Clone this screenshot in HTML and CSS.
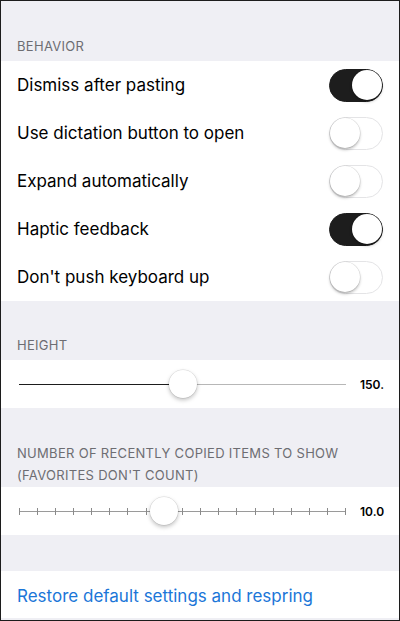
FILE: index.html
```html
<!DOCTYPE html>
<html lang="en">
<head>
  <meta charset="UTF-8" />
  <meta name="viewport" content="width=device-width, initial-scale=1.0"/>
  <title>Settings</title>
  <link rel="stylesheet" href="styles.css">
</head>
<body>
  <div class="ajustes">

    <!-- Behavior -->
    <div class="cabecera primera">BEHAVIOR</div>
    <div class="grupo">
      <div class="fila">
        <span>Dismiss after pasting</span>
        <span class="interruptor on"><span class="perilla"></span></span>
      </div>
      <div class="fila">
        <span>Use dictation button to open</span>
        <span class="interruptor"><span class="perilla"></span></span>
      </div>
      <div class="fila">
        <span>Expand automatically</span>
        <span class="interruptor"><span class="perilla"></span></span>
      </div>
      <div class="fila">
        <span>Haptic feedback</span>
        <span class="interruptor on"><span class="perilla"></span></span>
      </div>
      <div class="fila">
        <span>Don't push keyboard up</span>
        <span class="interruptor"><span class="perilla"></span></span>
      </div>
    </div>

    <!-- Height -->
    <div class="cabecera">HEIGHT</div>
    <div class="grupo">
      <div class="fila deslizador">
        <div class="pista">
          <div class="relleno" style="width: 50%"></div>
          <div class="pulgar" style="left: 50%"></div>
        </div>
        <span class="valor">150.</span>
      </div>
    </div>

    <!-- Items -->
    <div class="cabecera doble">NUMBER OF RECENTLY COPIED ITEMS TO SHOW<br>(FAVORITES DON'T COUNT)</div>
    <div class="grupo">
      <div class="fila deslizador">
        <div class="pista gris">
          <div class="marcas" id="marcas"></div>
          <div class="pulgar" style="left: 44.44%"></div>
        </div>
        <span class="valor">10.0</span>
      </div>
    </div>

    <div class="separador"></div>
    <div class="grupo">
      <div class="fila enlace">Restore default settings and respring</div>
    </div>
  </div>

  <script>
    // 19 marcas para el deslizador de 2 a 20
    const marcas = document.getElementById('marcas');
    for (let i = 0; i < 19; i++) {
      const m = document.createElement('span');
      m.classList.add('marca');
      marcas.appendChild(m);
    }
  </script>
</body>
</html>
```

FILE: styles.css
```css
body {
  margin: 0;
  font-family: Inter, 'Liberation Sans', sans-serif;
  color: #000;
}

.ajustes {
  width: 400px;
  height: 621px;
  box-sizing: border-box;
  border: 1px solid #1c1c1c;
  background-color: #efeff4;
  display: flex;
  flex-direction: column;
  overflow: hidden;
}

.cabecera {
  padding: 36px 16px 7px;
  font-size: 13px;
  line-height: 16px;
  color: #6d6d72;
  letter-spacing: 0.3px;
}

.cabecera.primera {
  padding-top: 37px;
}

.cabecera.doble {
  padding-top: 34px;
  padding-bottom: 1px;
  line-height: 22px;
}

.grupo {
  background-color: #fff;
}

.fila {
  height: 48px;
  padding: 0 16px;
  display: flex;
  align-items: center;
  justify-content: space-between;
  font-size: 17px;
}

/* Interruptores */
.interruptor {
  width: 54px;
  height: 33px;
  box-sizing: border-box;
  border-radius: 17px;
  border: 1.5px solid #e4e4e6;
  background-color: #fff;
  display: flex;
  align-items: center;
  justify-content: flex-start;
}

.interruptor.on {
  background-color: #1d1d1d;
  border-color: #1d1d1d;
  justify-content: flex-end;
}

.perilla {
  width: 30px;
  height: 30px;
  border-radius: 50%;
  background-color: #fff;
  box-shadow: 0 2px 3px rgba(0,0,0,0.25), 0 0 0 0.5px rgba(0,0,0,0.12);
}

/* Deslizadores */
.deslizador {
  padding: 0 0 0 18px;
}

.pista {
  flex: 1;
  position: relative;
  height: 1px;
  background-color: #b7b7b7;
}

.relleno {
  height: 1px;
  background-color: #1d1d1d;
}

.pulgar {
  position: absolute;
  top: -14px;
  width: 28px;
  height: 28px;
  margin-left: -14px;
  border-radius: 50%;
  background-color: #fff;
  box-shadow: 0 2px 4px rgba(0,0,0,0.25), 0 0 0 0.5px rgba(0,0,0,0.12);
}

.pista.gris {
  background-color: #9a9a9a;
}

.marcas {
  display: flex;
  justify-content: space-between;
  margin: -3px -0.5px 0;
}

.marca {
  width: 1px;
  height: 7px;
  background-color: #8a8a8a;
}

.valor {
  width: 39px;
  margin-left: 14px;
  font-size: 12px;
  font-weight: 600;
  white-space: nowrap;
  overflow: hidden;
}

.separador {
  height: 36px;
}

.enlace {
  height: 47px;
  padding-top: 2px;
  box-sizing: border-box;
  color: #1b76d8;
  font-size: 17px;
}
```
